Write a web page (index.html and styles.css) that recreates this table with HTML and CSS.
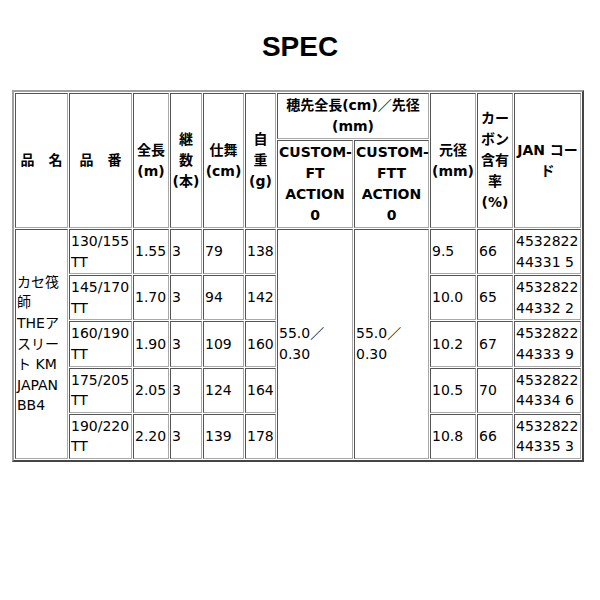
FILE: index.html
```html
<!DOCTYPE html>
<html lang="ja">
<head>
<meta charset="utf-8">
<title>SPEC</title>
<link rel="stylesheet" href="styles.css">
</head>
<body>
<h1 class="title">SPEC</h1>
<table class="spec">
  <colgroup>
    <col class="c-name"><col class="c-code"><col class="c-len"><col class="c-pcs">
    <col class="c-close"><col class="c-wt"><col class="c-tipa"><col class="c-tipb">
    <col class="c-butt"><col class="c-carbon"><col class="c-jan">
  </colgroup>
  <thead>
    <tr>
      <th rowspan="2">品　名</th>
      <th rowspan="2">品　番</th>
      <th rowspan="2">全長<br>(m)</th>
      <th rowspan="2">継<br>数<br>(本)</th>
      <th rowspan="2">仕舞<br>(cm)</th>
      <th rowspan="2">自<br>重<br>(g)</th>
      <th colspan="2">穂先全長(cm)／先径<br>(mm)</th>
      <th rowspan="2">元径<br>(mm)</th>
      <th rowspan="2">カー<br>ボン<br>含有<br>率<br>(%)</th>
      <th rowspan="2">JAN コー<br>ド</th>
    </tr>
    <tr>
      <th>CUSTOM-<br>FT<br>ACTION<br>0</th>
      <th>CUSTOM-<br>FTT<br>ACTION<br>0</th>
    </tr>
  </thead>
  <tbody>
    <tr>
      <td rowspan="5">カセ筏<br>師<br>THEア<br>スリー<br>ト KM<br>JAPAN<br>BB4</td>
      <td>130/155 TT</td><td>1.55</td><td>3</td><td>79</td><td>138</td>
      <td rowspan="5">55.0／0.30</td>
      <td rowspan="5">55.0／0.30</td>
      <td>9.5</td><td>66</td><td>4532822 44331 5</td>
    </tr>
    <tr>
      <td>145/170 TT</td><td>1.70</td><td>3</td><td>94</td><td>142</td>
      <td>10.0</td><td>65</td><td>4532822 44332 2</td>
    </tr>
    <tr>
      <td>160/190 TT</td><td>1.90</td><td>3</td><td>109</td><td>160</td>
      <td>10.2</td><td>67</td><td>4532822 44333 9</td>
    </tr>
    <tr>
      <td>175/205 TT</td><td>2.05</td><td>3</td><td>124</td><td>164</td>
      <td>10.5</td><td>70</td><td>4532822 44334 6</td>
    </tr>
    <tr>
      <td>190/220 TT</td><td>2.20</td><td>3</td><td>139</td><td>178</td>
      <td>10.8</td><td>66</td><td>4532822 44335 3</td>
    </tr>
  </tbody>
</table>
</body>
</html>
```
FILE: styles.css
```css
html, body {
  margin: 0;
  padding: 0;
  background: #fff;
}
body {
  font-family: "DejaVu Sans", "Noto Sans CJK JP", sans-serif;
  font-size: 14px;
  color: #000;
}
.title {
  font-family: "Liberation Sans", "Noto Sans CJK JP", sans-serif;
  font-size: 28px;
  line-height: 32px;
  font-weight: bold;
  text-align: center;
  margin: 31px 0 27px;
}
.spec {
  margin-left: 12px;
  width: 572px;
  table-layout: fixed;
  border-collapse: separate;
  border-spacing: 1px;
  border: 2px solid;
  border-color: #a0a0a0 #454545 #454545 #a0a0a0;
}
.spec th,
.spec td {
  border: 1px solid;
  border-color: #555 #a8a8a8 #a8a8a8 #555;
  padding: 1px;
  line-height: 21px;
  vertical-align: middle;
  overflow: visible;
}
.spec th {
  font-weight: bold;
  text-align: center;
}
.spec td {
  text-align: left;
  font-weight: normal;
  line-height: 20.6px;
}
.c-name { width: 53px; }
.c-code { width: 63px; }
.c-len { width: 36px; }
.c-pcs { width: 32px; }
.c-close { width: 41px; }
.c-wt { width: 31px; }
.c-tipa { width: 76px; }
.c-tipb { width: 75px; }
.c-butt { width: 46px; }
.c-carbon { width: 36px; }
.c-jan { width: 67px; }
```
